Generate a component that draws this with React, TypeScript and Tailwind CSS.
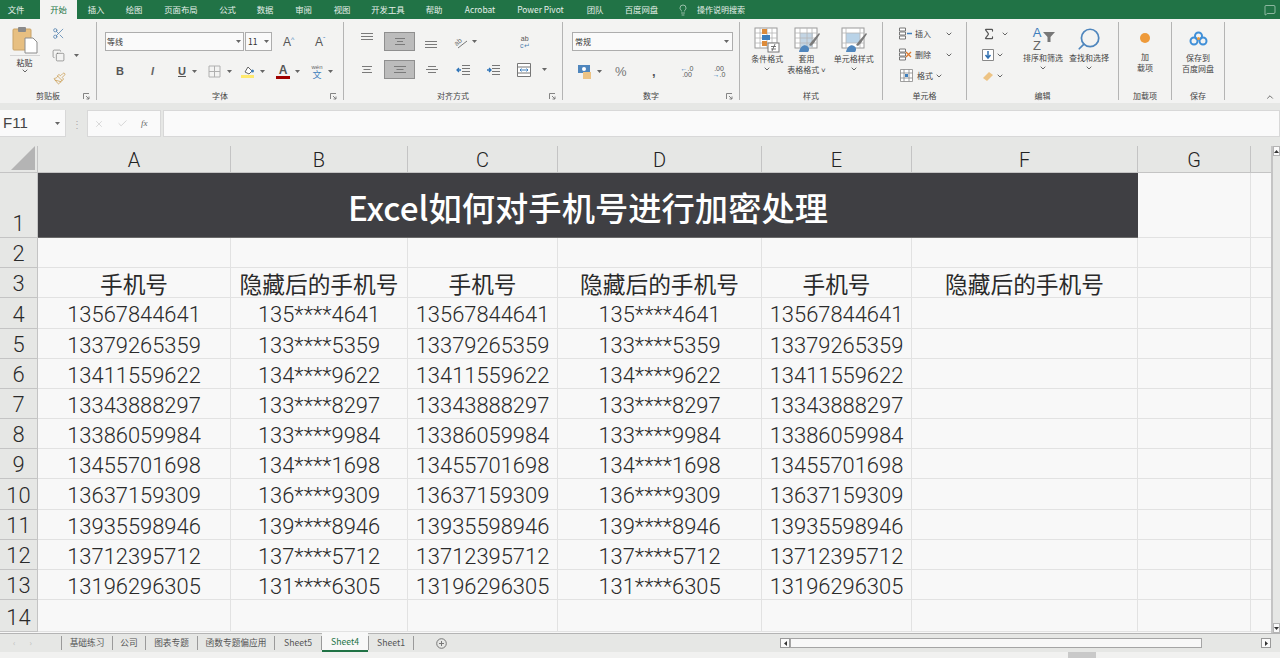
import React from "react";
import { Scissors, Copy, Paintbrush, Lightbulb, MessageSquare, ChevronUp, Search, X, Check, Sigma } from "lucide-react";

const cjk = "'Noto Sans CJK SC','Liberation Sans',sans-serif";

const tabs: [string, string][] = [
  ["文件", "w-[40px] pr-[8px]"], ["开始", "w-[37px] bg-[#f3f3f2] text-[#217346]"], ["插入", "w-[38px]"], ["绘图", "w-[38px]"],
  ["页面布局", "w-[56px]"], ["公式", "w-[37px]"], ["数据", "w-[38px]"], ["审阅", "w-[39px]"], ["视图", "w-[38px]"], ["开发工具", "w-[54px]"],
  ["帮助", "w-[38px]"], ["Acrobat", "w-[54px]"], ["Power Pivot", "w-[67px]"], ["团队", "w-[42px]"], ["百度网盘", "w-[51px]"],
];

const Caret = ({ className = "" }: { className?: string }) => (
  <svg width="5" height="3" viewBox="0 0 5 3" className={"shrink-0 " + className}><path d="M0 0h5L2.5 3z" fill="#666" /></svg>
);
const Vee = ({ className = "" }: { className?: string }) => (
  <svg width="6" height="4" viewBox="0 0 6 4" className={"shrink-0 " + className}><path d="M.7.7 3 3 5.3.7" fill="none" stroke="#666" strokeWidth="1" /></svg>
);
const Launcher = () => (
  <svg width="7" height="7" viewBox="0 0 7 7" className="shrink-0"><path d="M.5 6V.5H6M3 3l3 3M6 3.5V6H3.5" fill="none" stroke="#777" strokeWidth=".9" /></svg>
);

function Group({ w, label, children, launcher, pl = "" }: { w: string; label: string; children?: React.ReactNode; launcher?: boolean; pl?: string }) {
  return (
    <div className={"flex flex-col h-[78px] border-r border-[#b4b4b4] shrink-0 " + w}>
      <div className={"flex-1 min-h-0 " + pl}>{children}</div>
      <div className="relative h-[14px] -mb-[3px] text-center text-[8px] leading-[14px] text-[#444]">
        {label}
        {launcher && <span className="absolute right-[6px] top-[4px]"><Launcher /></span>}
      </div>
    </div>
  );
}

const Lines = ({ rows = [10, 6, 10] }: { rows?: number[] }) => (
  <svg width="14" height="10" viewBox="0 0 14 10" className="shrink-0">
    {rows.map((r, i) => <rect key={i} x={(14 - r) / 2} y={1 + i * 3} width={r} height="1" fill="#7a7a7a" />)}
  </svg>
);

const AlignBtn = ({ on, rows }: { on?: boolean; rows?: number[] }) => (
  <div className={"flex items-center justify-center w-[31px] h-[19px] " + (on ? "bg-[#bcbcbc] border border-[#8f8f8f]" : "")}>
    <Lines rows={rows} />
  </div>
);

const PasteIcon = () => (
  <svg width="26" height="28" viewBox="0 0 26 28">
    <rect x="1" y="3" width="18" height="21" rx="1" fill="#e7bf81" stroke="#c9a368" />
    <rect x="6" y="1" width="8" height="5" rx="1" fill="#8a8a8a" />
    <path d="M13 12h8l4 4v11H13z" fill="#fff" stroke="#8c8c8c" />
  </svg>
);

const StyleIcon = ({ kind }: { kind: number }) => (
  <svg width="26" height="26" viewBox="0 0 26 26">
    <rect x="1" y="1" width="22" height="20" fill="#fff" stroke="#9a9a9a" />
    {kind === 1 && <rect x="6" y="6" width="13" height="14" fill="#c3d5e4" />}
    {kind === 2 && <rect x="5" y="6" width="14" height="10" fill="#b9d3e8" />}
    {kind !== 2 && <path d="M1 6h22M1 11h22M1 16h22M6 1v20M13 1v20M18 1v20" stroke="#b5b5b5" strokeWidth=".8" />}
    {kind === 2 && <path d="M1 6h22M1 16h22M5 1v20M19 1v20" stroke="#b5b5b5" strokeWidth=".8" />}
    {kind === 0 && (
      <>
        <rect x="8" y="2" width="5" height="5" fill="#dd8b3a" />
        <rect x="8" y="8" width="8" height="5" fill="#3f7fbd" />
        <rect x="8" y="14" width="5" height="5" fill="#dd8b3a" />
        <rect x="14" y="16" width="11" height="9" fill="#fff" stroke="#777" />
        <path d="M17 19.500h5M17 22h5M18 24l3-7" stroke="#555" strokeWidth=".8" />
      </>
    )}
    {kind !== 0 && (
      <>
        <path d="M5 25c1-5 5-8 8-6 2 1 3 4 1 6z" fill="#4f86bd" />
        <path d="M15 18l3-4 7-8 1 1-6 9-3 3z" fill="#7a7a7a" />
      </>
    )}
  </svg>
);

const TabBar = () => (
  <div className="flex h-[19px] bg-[#217346] text-[8.4px] text-[#e6f0ea] items-stretch">
    {tabs.map(([t, c]) => (
      <div key={t} className={"flex items-center justify-center shrink-0 " + c}>{t}</div>
    ))}
    <div className="flex items-center ml-[10px]">
      <Lightbulb size={12} strokeWidth={1.2} className="text-[#e6f0ea]" />
      <span className="ml-[8px] text-[8px]">操作说明搜索</span>
    </div>
    <div className="flex-1 flex justify-end items-center pr-[4px]">
      <MessageSquare size={12} strokeWidth={1.1} className="text-[#e6f0ea]" />
    </div>
  </div>
);

const Ribbon = () => (
  <div className="flex h-[84px] bg-[#f3f3f2] pt-[3px] relative">
    <Group w="w-[97px]" label="剪贴板" launcher>
      <div className="flex pt-[4px]">
        <div className="w-[46px] flex flex-col items-center pl-[3px]">
          <PasteIcon />
          <div className="w-[30px] border-t border-[#d4d4d4] mt-[1px]" />
          <div className="text-[8px] leading-[11px] mt-[1px] text-[#333]">粘贴</div>
          <Vee className="mt-[1px]" />
        </div>
        <div className="flex flex-col items-start gap-[9px] pl-[6px] pt-[1px]">
          <Scissors size={13} strokeWidth={1.4} className="text-[#4f7fae]" />
          <div className="flex items-center gap-[9px]"><Copy size={13} strokeWidth={1.1} className="text-[#666]" /><Caret /></div>
          <Paintbrush size={13} strokeWidth={1.4} className="text-[#c99a4e] ml-[1px] mt-[1px]" />
        </div>
      </div>
    </Group>
    <Group w="w-[247px]" label="字体" launcher pl="pl-[8px]">
      <div className="flex items-center pt-[10px]">
        <div className="flex items-center justify-between w-[139px] h-[19px] border border-[#adadad] bg-[#fafafa] pl-[1px] pr-[2px] text-[8px] text-[#333]">等线<Caret /></div>
        <div className="flex items-center justify-between w-[27px] h-[19px] ml-[1px] border border-[#adadad] bg-[#fafafa] px-[2px] text-[8.5px] text-[#333]">11<Caret /></div>
        <span className="ml-[11px] w-[32px] text-[12px] text-[#555] font-['Liberation_Sans']">A<sup className="text-[#4f86bd] text-[7px]">^</sup></span>
        <span className="text-[12px] text-[#555] font-['Liberation_Sans']">A<sup className="text-[#4f86bd] text-[7px]">ˇ</sup></span>
      </div>
      <div className="flex items-center pt-[11px] pl-[11px] h-[30px] text-[#555] font-['Liberation_Sans']">
        <span className="w-[35px] text-[11px] font-bold">B</span>
        <span className="w-[27px] text-[11px] italic font-bold text-[#666]">I</span>
        <span className="w-[14px] text-[11px] underline font-bold">U</span>
        <Caret className="mr-[11px]" />
        <svg width="13" height="13" viewBox="0 0 13 13"><path d="M1 1h11v11H1zM6.500 1v11M1 6.500h11" fill="none" stroke="#b0b0b0" /></svg>
        <Caret className="ml-[6px] mr-[9px]" />
        <svg width="14" height="14" viewBox="0 0 14 14"><path d="M4 7l3-5 4 4-3 3z" fill="#fff" stroke="#666" /><rect y="10" width="13" height="3" fill="#ffe96e" /><circle cx="11.500" cy="6" r="1.500" fill="#3f7fbd" /></svg>
        <Caret className="ml-[5px] mr-[11px]" />
        <div className="flex flex-col items-center w-[14px] leading-none">
          <span className="text-[12px] font-bold leading-[11px]">A</span>
          <span className="w-[14px] h-[3px] bg-[#a00000]" />
        </div>
        <Caret className="ml-[5px] mr-[11px]" />
        <div className="flex flex-col items-center w-[12px]">
          <span className="text-[6px] leading-[6px] text-[#666]">wén</span>
          <span className="text-[9px] leading-[9px] text-[#3f7fbd]" style={{ fontFamily: cjk }}>文</span>
        </div>
        <Caret className="ml-[5px]" />
      </div>
    </Group>
    <Group w="w-[219px]" label="对齐方式" launcher pl="pl-[16px]">
      <div className="flex items-center pt-[10px] h-[29px]">
        <div className="mb-[9px]"><Lines rows={[12, 12, 12]} /></div>
        <div className="ml-[10px]"><AlignBtn on /></div>
        <div className="ml-[9px] mt-[6px]"><Lines rows={[12, 12, 12]} /></div>
        <svg width="16" height="14" viewBox="0 0 16 14" className="ml-[16px]">
          <text x="1" y="9" fontSize="7" fill="#666" fontFamily="Liberation Sans" transform="rotate(-40 5 8)">ab</text>
          <path d="M4 13 13 6" stroke="#777" strokeWidth="1" />
        </svg>
        <Caret className="ml-[2px]" />
        <div className="ml-[43px] flex flex-col items-center text-[7px] leading-[7px] text-[#555] font-['Liberation_Sans']"><span>ab</span><span className="text-[#4f7fae]">c↵</span></div>
      </div>
      <div className="flex items-center pt-[9px]">
        <Lines rows={[10, 7, 10]} />
        <div className="ml-[10px]"><AlignBtn on rows={[12, 7, 12]} /></div>
        <div className="ml-[10px]"><Lines rows={[8, 12, 8]} /></div>
        <svg width="14" height="10" viewBox="0 0 14 10" className="ml-[17px] shrink-0"><path d="M6 .5h8M6 3.500h8M6 6.500h8M6 9.500h8" stroke="#777" /><path d="M5 5H1M3 3 1 5l2 2" fill="none" stroke="#2f74b8" strokeWidth="1.300" /></svg>
        <svg width="14" height="10" viewBox="0 0 14 10" className="ml-[16px] shrink-0"><path d="M6 .5h8M6 3.500h8M6 6.500h8M6 9.500h8" stroke="#777" /><path d="M1 5h4M3 3l2 2-2 2" fill="none" stroke="#2f74b8" strokeWidth="1.300" /></svg>
        <svg width="14" height="14" viewBox="0 0 14 14" className="ml-[17px] shrink-0"><path d="M.5.5h13v13H.5zM.500 4h13M.500 10h13" fill="#fff" stroke="#777" /><path d="M3 7h8M4.500 5.500 3 7l1.500 1.500M9.500 5.500 11 7 9.500 8.500" fill="none" stroke="#3f7fbd" /></svg>
        <Caret className="ml-[11px]" />
      </div>
    </Group>
    <Group w="w-[177px]" label="数字" launcher pl="pl-[9px]">
      <div className="flex items-center pt-[10px]">
        <div className="flex items-center justify-between w-[161px] h-[19px] border border-[#adadad] bg-[#fafafa] pl-[2px] pr-[3px] text-[8px] text-[#333]">常规<Caret /></div>
      </div>
      <div className="flex items-center pt-[11px] h-[30px] pl-[6px] font-['Liberation_Sans']">
        <svg width="14" height="14" viewBox="0 0 14 14"><rect y="0" width="12" height="8" fill="#4f86bd" /><circle cx="6" cy="4" r="2" fill="#fff" /><rect x="5" y="7" width="8" height="7" fill="#edc384" /></svg>
        <Caret className="ml-[5px] mr-[13px]" />
        <span className="text-[13px] text-[#777] w-[37px]">%</span>
        <span className="text-[13px] font-bold text-[#555] w-[19px]">,</span>
        <span className="w-[32px] text-[7px] leading-[6px] text-[#555] text-center"><span className="text-[#2f74b8]">←</span>.0<br />.00</span>
        <span className="w-[32px] text-[7px] leading-[6px] text-[#555] text-center">.00<br /><span className="text-[#2f74b8]">→</span>.0</span>
      </div>
    </Group>
    <Group w="w-[143px]" label="样式">
      <div className="flex pt-[5px] text-[8px] leading-[11px] text-[#444] text-center">
        <div className="w-[54px] ml-px flex flex-col items-center"><StyleIcon kind={0} /><span>条件格式</span><Vee className="mt-[3px]" /></div>
        <div className="w-[28px] -ml-px flex flex-col items-center"><StyleIcon kind={1} /><span>套用</span><span className="whitespace-nowrap">表格格式 ˅</span></div>
        <div className="w-[58px] ml-[5px] flex flex-col items-center"><StyleIcon kind={2} /><span className="whitespace-nowrap">单元格样式</span><Vee className="mt-[3px]" /></div>
      </div>
    </Group>
    <Group w="w-[84px]" label="单元格" pl="pl-[16px]">
      <div className="flex flex-col gap-[8px] pt-[5px] text-[8px] leading-[13px] text-[#444]">
        <div className="flex items-center"><svg width="13" height="13" viewBox="0 0 13 13"><path d="M.5 1h6v3h-6zM.5 5h6v3h-6zM.5 9h6v3h-6z" fill="#fff" stroke="#777" /><path d="M8 6.500h5" stroke="#3f7fbd" strokeWidth="1.500" /></svg><span className="ml-[3px] w-[29px]">插入</span><Vee className="ml-[2px]" /></div>
        <div className="flex items-center"><svg width="13" height="13" viewBox="0 0 13 13"><path d="M.5 1h6v3h-6zM.5 5h6v3h-6zM.5 9h6v3h-6z" fill="#fff" stroke="#777" /><path d="M7 4l5 5M12 4 7 9" stroke="#dd7a2e" strokeWidth="1.300" /></svg><span className="ml-[3px] w-[29px]">删除</span><Vee className="ml-[2px]" /></div>
        <div className="flex items-center pl-[1px]"><svg width="13" height="13" viewBox="0 0 13 13"><path d="M.5.5h12v12H.5zM.5 4h12M.5 9h12M4 .5v12M9 .5v12" fill="#fff" stroke="#888" strokeWidth=".8" /><rect x="5" y="5" width="3" height="3" fill="#3f7fbd" /></svg><span className="ml-[4px]">格式</span><Vee className="ml-[3px]" /></div>
      </div>
    </Group>
    <Group w="w-[152px]" label="编辑">
      <div className="flex pl-[15px] pt-[4px]">
        <div className="flex flex-col gap-[5px] w-[40px]">
          <div className="flex items-center h-[16px]"><Sigma size={14} strokeWidth={2} className="text-[#555]" /><Vee className="ml-[6px]" /></div>
          <div className="flex items-center h-[16px]"><svg width="12" height="12" viewBox="0 0 12 12"><path d="M.5.5h11v11H.5z" fill="#fff" stroke="#888" /><path d="M6 2v7M3.500 6 6 9l2.500-3" fill="none" stroke="#2f6fb0" strokeWidth="1.500" /></svg><Vee className="ml-[3px]" /></div>
          <div className="flex items-center h-[16px]"><svg width="12" height="12" viewBox="0 0 12 12"><path d="M1 8l6-6 4 3-6 6z" fill="#edc384" /></svg><Vee className="ml-[3px]" /></div>
        </div>
        <div className="w-[42px] flex flex-col items-center text-[8px] leading-[11px] text-[#444]">
          <div className="flex h-[26px] items-center font-['Liberation_Sans']">
            <div className="flex flex-col text-[13px] leading-[13px] w-[12px] text-center"><span className="text-[#3f7fbd]">A</span><span className="text-[#666]">Z</span></div>
            <svg width="12" height="12" viewBox="0 0 12 12" className="mb-[5px]"><path d="M0 1h12L7.500 6v5h-3V6z" fill="#777" /></svg>
          </div>
          <span className="whitespace-nowrap">排序和筛选</span>
          <Vee className="mt-[3px]" />
        </div>
        <div className="w-[50px] flex flex-col items-center text-[8px] leading-[11px] text-[#444]">
          <Search size={26} strokeWidth={1.6} className="text-[#4f86bd] -scale-x-100" />
          <span className="whitespace-nowrap">查找和选择</span>
          <Vee className="mt-[3px]" />
        </div>
      </div>
    </Group>
    <Group w="w-[53px]" label="加载项">
      <div className="flex flex-col items-center pt-[11px] text-[8px] leading-[11px] text-[#444]">
        <div className="w-[10px] h-[10px] rounded-full bg-[#ee9a3a] mb-[8px]" />
        <span>加</span><span>载项</span>
      </div>
    </Group>
    <Group w="w-[53px]" label="保存">
      <div className="flex flex-col items-center pt-[9px] text-[8px] leading-[11px] text-[#444]">
        <svg width="19" height="15" viewBox="0 0 19 15" className="mb-[6px]">
          <circle cx="9.500" cy="5" r="3.500" fill="none" stroke="#3f8fd8" strokeWidth="2" />
          <circle cx="5" cy="10" r="3.500" fill="none" stroke="#3f8fd8" strokeWidth="2" />
          <circle cx="14" cy="10" r="3.500" fill="none" stroke="#3f8fd8" strokeWidth="2" />
          <circle cx="9.500" cy="7.500" r="1.500" fill="#ee9a3a" />
        </svg>
        <span>保存到</span><span>百度网盘</span>
      </div>
    </Group>
    <div className="flex-1 flex justify-end items-end pr-[5px] pb-[1px]"><ChevronUp size={10} className="text-[#555]" /></div>
  </div>
);

const FormulaBar = () => (
  <div className="h-[43px] bg-[#e6e7e5] pt-[7px]">
    <div className="flex h-[27px]">
      <div className="w-[66px] bg-[#fafafa] border-r border-b border-[#d8d8d8] flex items-center justify-between pl-[3px] pr-[5px] text-[15px] text-[#444] font-['Liberation_Sans']">F11<Caret /></div>
      <div className="w-[21px] flex items-center justify-center text-[#aaa] text-[10px]">⋮</div>
      <div className="w-[74px] bg-[#fafafa] border border-[#d8d8d8] flex items-center pl-[6px] gap-[13px]">
        <X size={10} strokeWidth={1} className="text-[#aaa]" />
        <Check size={11} strokeWidth={1} className="text-[#aaa]" />
        <span className="italic text-[9px] text-[#666] font-['Liberation_Serif']">fx</span>
      </div>
      <div className="flex-1 ml-[2px] bg-[#fafafa] border border-[#d8d8d8]" />
    </div>
  </div>
);

const cols = ["A", "B", "C", "D", "E", "F", "G"];
const phones = [
  ["13567844641", "135****4641"], ["13379265359", "133****5359"], ["13411559622", "134****9622"],
  ["13343888297", "133****8297"], ["13386059984", "133****9984"], ["13455701698", "134****1698"],
  ["13637159309", "136****9309"], ["13935598946", "139****8946"], ["13712395712", "137****5712"],
  ["13196296305", "131****6305"],
];
const cell = "border-r border-b border-[#e2e2e2] flex items-center justify-center text-[#2a2a2a]";
const num = cell + " pt-[5px]";
const rowHead = "bg-[#e6e7e5] border-r border-b border-[#c4c4c4] flex items-end justify-center text-[#2a2a2a] leading-none pb-[2px]";
const head = "bg-[#e6e7e5] border-r border-b border-[#c4c4c4] flex items-center justify-center text-[20px] text-[#222] pt-[2px]";

const Sheet = () => (
  <div className="flex h-[487px]">
    <div
      className="grid flex-1 grid-cols-[38px_193px_177px_150px_204px_150px_226px_113px_20px] grid-rows-[27px_65px_30px_30px_31px_30px_30px_30px_30px_30px_31px_30px_30px_30px_32px] bg-[#f8f8f8] text-[21.9px] font-light"
      style={{ fontFamily: "Roboto,'Noto Sans CJK SC',sans-serif" }}
    >
      <div className="bg-[#e6e7e5] border-r border-b border-[#c4c4c4] flex items-end justify-end p-[2px]">
        <svg width="24" height="24" viewBox="0 0 24 24"><path d="M24 0v24H0z" fill="#b4b4b4" /></svg>
      </div>
      {cols.map((c) => <div key={c} className={head}>{c}</div>)}
      <div className="bg-[#e6e7e5] border-b border-[#c4c4c4]" />

      <div className={rowHead}>1</div>
      <div className="col-span-6 bg-[#3f3f43] flex items-center justify-center text-white text-[33.300px] font-medium border-b border-[#6a6a6a] pt-[3px]" style={{ fontFamily: "'Noto Sans CJK SC',sans-serif" }}>
        Excel如何对手机号进行加密处理
      </div>
      <div className="border-r border-b border-[#e2e2e2]" />
      <div className="border-b border-[#e2e2e2]" />

      <div className={rowHead}>2</div>
      {cols.map((c) => <div key={c} className={cell} />)}
      <div className="border-b border-[#e2e2e2]" />

      <div className={rowHead}>3</div>
      {["手机号", "隐藏后的手机号", "手机号", "隐藏后的手机号", "手机号", "隐藏后的手机号"].map((t, i) => (
        <div key={i} className={cell + " text-[22.7px] font-normal whitespace-nowrap pt-[4px]"} style={{ fontFamily: "'Noto Sans CJK SC',sans-serif" }}>{t}</div>
      ))}
      <div className={cell} />
      <div className="border-b border-[#e2e2e2]" />

      {phones.map(([a, b], i) => (
        <React.Fragment key={a}>
          <div className={rowHead}>{i + 4}</div>
          <div className={num}>{a}</div>
          <div className={num}>{b}</div>
          <div className={num}>{a}</div>
          <div className={num}>{b}</div>
          <div className={num}>{a}</div>
          <div className={cell} />
          <div className={cell} />
          <div className="border-b border-[#e2e2e2]" />
        </React.Fragment>
      ))}

      <div className={rowHead}>14</div>
      {cols.map((c) => <div key={c} className={cell} />)}
      <div className="border-b border-[#e2e2e2]" />
    </div>
    <ScrollV />
  </div>
);

const ScrollV = () => (
  <div className="w-[9px] bg-[#e6e7e5] border-l-2 border-[#c4c4c4] flex flex-col justify-between">
    <div className="h-[10px] bg-[#fafafa] border border-[#b4b4b4] flex items-center justify-center"><svg width="5" height="3" viewBox="0 0 5 3"><path d="M0 3h5L2.500 0z" fill="#333" /></svg></div>
    <div className="h-[10px] bg-[#fafafa] border border-[#b4b4b4] flex items-center justify-center"><svg width="5" height="3" viewBox="0 0 5 3"><path d="M0 0h5L2.500 3z" fill="#333" /></svg></div>
  </div>
);

const sheets: [string, string][] = [
  ["基础练习", "w-[51px]"], ["公司", "w-[33px]"], ["图表专题", "w-[52px]"], ["函数专题偏应用", "w-[77px]"], ["Sheet5", "w-[47px]"],
];

const SheetTabs = () => (
  <div className="h-[19px] flex bg-[#e6e7e5] border-t border-[#b4b4b4] text-[8.7px] text-[#555]">
    <div className="w-[62px] flex items-center pl-[13px] gap-[14px] text-[#bbb] border-r border-[#9a9a9a] my-[2px] text-[8px]"><span>‹</span><span>›</span></div>
    {sheets.map(([t, w]) => (
      <div key={t} className={"flex items-center justify-center border-r border-[#9a9a9a] my-[2px] shrink-0 " + w}>{t}</div>
    ))}
    <div className="w-[46px] -mt-px bg-[#f8f8f8] border-b-2 border-b-[#217346] flex items-center justify-center text-[#217346] shrink-0">Sheet4</div>
    <div className="w-[46px] flex items-center justify-center border-x border-[#9a9a9a] my-[2px] shrink-0">Sheet1</div>
    <div className="w-[33px] flex items-center justify-end shrink-0">
      <svg width="11" height="11" viewBox="0 0 11 11"><circle cx="5.500" cy="5.500" r="4.800" fill="none" stroke="#777" /><path d="M3 5.500h5M5.500 3v5" stroke="#777" /></svg>
    </div>
    <div className="w-[333px] shrink-0" />
    <div className="flex items-center flex-1 pr-[9px]">
      <div className="w-[10px] h-[10px] bg-[#fafafa] border border-[#9a9a9a] flex items-center justify-center"><svg width="3" height="5" viewBox="0 0 3 5"><path d="M3 0v5L0 2.500z" fill="#333" /></svg></div>
      <div className="w-[412px] h-[10px] bg-[#f8f8f8] border border-[#a5a5a5]" />
      <div className="flex-1" />
      <div className="w-[10px] h-[10px] bg-[#fafafa] border border-[#9a9a9a] flex items-center justify-center"><svg width="3" height="5" viewBox="0 0 3 5"><path d="M0 0v5l3-2.500z" fill="#333" /></svg></div>
    </div>
  </div>
);

export default function App() {
  return (
    <div className="w-[1280px] h-[658px] overflow-hidden bg-[#efefee] flex flex-col" style={{ fontFamily: cjk }}>
      <TabBar />
      <Ribbon />
      <FormulaBar />
      <Sheet />
      <SheetTabs />
      <div className="flex-1 flex justify-center bg-[#f1f1f0]"><div className="ml-[884px] w-[28px] bg-[#c9c9c9] shrink-0" /></div>
    </div>
  );
}
